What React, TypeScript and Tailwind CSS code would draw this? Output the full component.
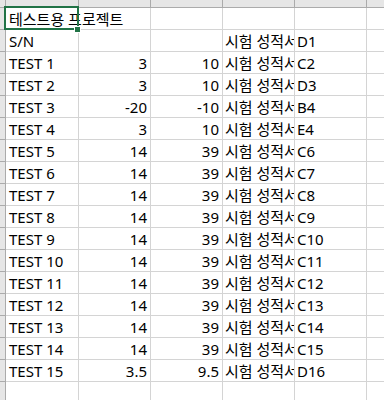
import React from "react";

type Row = {
  a?: string;
  b?: string;
  c?: string;
  d?: string;
  e?: string;
};

const rows: Row[] = [
  { a: "테스트용 프로젝트" },
  { a: "S/N", d: "시험 성적서", e: "D1" },
  { a: "TEST 1", b: "3", c: "10", d: "시험 성적서", e: "C2" },
  { a: "TEST 2", b: "3", c: "10", d: "시험 성적서", e: "D3" },
  { a: "TEST 3", b: "-20", c: "-10", d: "시험 성적서", e: "B4" },
  { a: "TEST 4", b: "3", c: "10", d: "시험 성적서", e: "E4" },
  { a: "TEST 5", b: "14", c: "39", d: "시험 성적서", e: "C6" },
  { a: "TEST 6", b: "14", c: "39", d: "시험 성적서", e: "C7" },
  { a: "TEST 7", b: "14", c: "39", d: "시험 성적서", e: "C8" },
  { a: "TEST 8", b: "14", c: "39", d: "시험 성적서", e: "C9" },
  { a: "TEST 9", b: "14", c: "39", d: "시험 성적서", e: "C10" },
  { a: "TEST 10", b: "14", c: "39", d: "시험 성적서", e: "C11" },
  { a: "TEST 11", b: "14", c: "39", d: "시험 성적서", e: "C12" },
  { a: "TEST 12", b: "14", c: "39", d: "시험 성적서", e: "C13" },
  { a: "TEST 13", b: "14", c: "39", d: "시험 성적서", e: "C14" },
  { a: "TEST 14", b: "14", c: "39", d: "시험 성적서", e: "C15" },
  { a: "TEST 15", b: "3.5", c: "9.5", d: "시험 성적서", e: "D16" },
  {},
];

const cell = "h-[22px] shrink-0 border-r border-b border-[#d4d4d4] whitespace-nowrap leading-[21px] pt-[1px]";

export default function App() {
  return (
    <div
      className="h-[400px] w-[384px] overflow-hidden bg-white text-[15px] text-black"
      style={{ fontFamily: '"Noto Sans", "Noto Sans CJK KR", sans-serif' }}
    >
      {/* column headers */}
      <div className="flex h-[8px] border-b border-[#ababab] bg-[#e6e6e6]">
        <div className="w-[6px] shrink-0 border-r border-[#ababab]" />
        <div className="w-[73px] shrink-0 border-r border-[#ababab]" />
        <div className="w-[72px] shrink-0 border-r border-[#ababab]" />
        <div className="w-[72px] shrink-0 border-r border-[#ababab]" />
        <div className="w-[72px] shrink-0 border-r border-[#ababab]" />
        <div className="w-[72px] shrink-0 border-r border-[#ababab]" />
        <div className="flex-1" />
      </div>

      {rows.map((r, i) => (
        <div key={i} className="flex">
          <div className="h-[22px] w-[6px] shrink-0 border-r border-b border-[#ababab] bg-[#e6e6e6]" />
          {i === 0 ? (
            <div className={`${cell} relative w-[73px] pl-[3px]`}>
              {r.a}
              <div className="absolute -left-[2px] -top-[2px] h-[24px] w-[75px] border-2 border-[#217346]" />
              <div className="absolute left-[68px] top-[18px] h-[7px] w-[7px] border border-white bg-[#217346]" />
            </div>
          ) : (
            <div className={`${cell} w-[73px] overflow-hidden pl-[3px]`}>{r.a}</div>
          )}
          <div className={`${cell} w-[72px] overflow-hidden pr-[3px] text-right`}>{r.b}</div>
          <div className={`${cell} w-[72px] overflow-hidden pr-[3px] text-right`}>{r.c}</div>
          <div className={`${cell} w-[72px] overflow-hidden pl-[2px]`}>{r.d}</div>
          <div className={`${cell} w-[72px] overflow-hidden pl-[2px]`}>{r.e}</div>
          <div className={`${cell} flex-1 border-r-0`} />
        </div>
      ))}
    </div>
  );
}
